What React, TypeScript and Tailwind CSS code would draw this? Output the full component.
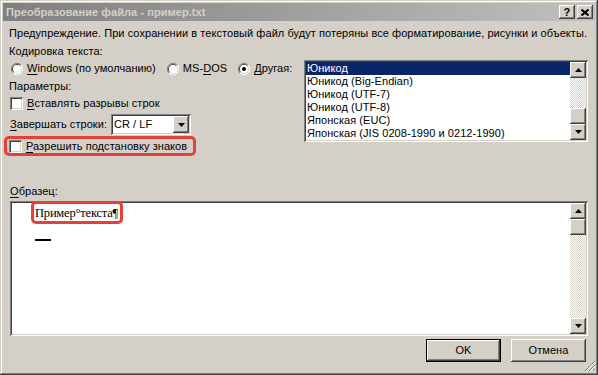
import type { ReactNode } from 'react';

const raised =
  'shadow-[inset_-1px_-1px_#404040,inset_1px_1px_#ffffff,inset_-2px_-2px_#808080,inset_2px_2px_#d4d0c8]';
const sunken =
  'shadow-[inset_1px_1px_#808080,inset_-1px_-1px_#ffffff,inset_2px_2px_#404040,inset_-2px_-2px_#d4d0c8]';
const checker = 'bg-[repeating-conic-gradient(#d4d0c8_0_25%,#ffffff_0_50%)] bg-[length:2px_2px]';

const Arrow = ({ up }: { up?: boolean }) => (
  <svg width="7" height="4" viewBox="0 0 7 4">
    <path d={up ? 'M3.5 0 L7 4 L0 4 Z' : 'M0 0 L7 0 L3.5 4 Z'} fill="#000" />
  </svg>
);

const ScrollBtn = ({ up }: { up?: boolean }) => (
  <div className={`w-[16px] h-[16px] bg-[#d4d0c8] flex items-center justify-center ${raised}`}>
    <Arrow up={up} />
  </div>
);

const Radio = ({ checked }: { checked?: boolean }) => (
  <svg width="12" height="12" viewBox="0 0 12 12" className="shrink-0">
    <circle cx="6" cy="6" r="5.5" fill="#fff" />
    <path d="M10 2 A5.5 5.5 0 0 0 2 10" stroke="#808080" fill="none" />
    <path d="M9.3 2.7 A4.5 4.5 0 0 0 2.7 9.3" stroke="#404040" fill="none" />
    <path d="M2 10 A5.5 5.5 0 0 0 10 2" stroke="#fff" fill="none" />
    <path d="M2.7 9.3 A4.5 4.5 0 0 0 9.3 2.7" stroke="#d4d0c8" fill="none" />
    {checked && <circle cx="6" cy="6" r="2" fill="#000" />}
  </svg>
);

const Checkbox = () => <div className={`w-[13px] h-[13px] bg-white shrink-0 ${sunken}`} />;

const U = ({ children }: { children: ReactNode }) => <span className="underline underline-offset-2">{children}</span>;

const encodings = [
  'Юникод',
  'Юникод (Big-Endian)',
  'Юникод (UTF-7)',
  'Юникод (UTF-8)',
  'Японская (EUC)',
  'Японская (JIS 0208-1990 и 0212-1990)',
];

export default function App() {
  return (
    <div
      className={`w-[598px] h-[375px] bg-[#d4d0c8] p-[3px] font-['Liberation_Sans',sans-serif] text-[11px] leading-[13px] tracking-[0.06px] text-black overflow-hidden ${'shadow-[inset_-1px_-1px_#404040,inset_1px_1px_#d4d0c8,inset_-2px_-2px_#808080,inset_2px_2px_#ffffff]'}`}
    >
      {/* title bar */}
      <div className="h-[18px] flex items-center pl-[3px] pr-[2px] bg-gradient-to-r from-[#808080] to-[#c0c0c0]">
        <span className="font-bold text-[#d4d0c8] flex-1">Преобразование файла - пример.txt</span>
        <div className={`w-[16px] h-[14px] bg-[#d4d0c8] flex items-center justify-center font-bold text-[11px] ${raised}`}>?</div>
        <div className={`ml-[2px] w-[16px] h-[14px] bg-[#d4d0c8] flex items-center justify-center ${raised}`}>
          <svg width="8" height="7" viewBox="0 0 8 7">
            <path d="M0.5 0.5 L7.5 6.5 M7.5 0.5 L0.5 6.5" stroke="#000" strokeWidth="2" />
          </svg>
        </div>
      </div>

      <div className="px-[6px]">
        <div className="mt-[6px]">
          Предупреждение. При сохранении в текстовый файл будут потеряны все форматирование, рисунки и объекты.
        </div>
        <div className="mt-[5px]">Кодировка текста:</div>

        <div className="flex">
          {/* left column */}
          <div className="w-[295px]">
            <div className="mt-[4px] h-[13px] flex items-center">
              <span className="ml-[2px]"><Radio /></span>
              <span className="ml-[4px]"><U>W</U>indows (по умолчанию)</span>
              <span className="ml-[11px]"><Radio /></span>
              <span className="ml-[4px]">MS-<U>D</U>OS</span>
              <span className="ml-[11px]"><Radio checked /></span>
              <span className="ml-[4px]"><U>Д</U>ругая:</span>
            </div>
            <div className="mt-[5px]">Параметры:</div>
            <div className="mt-[4px] h-[13px] flex items-center">
              <span className="ml-[1px]"><Checkbox /></span>
              <span className="ml-[4px]"><U>В</U>ставлять разрывы строк</span>
            </div>
            <div className="mt-[4px] flex items-center">
              <span className="ml-[1px] w-[101px]"><U>З</U>авершать строки:</span>
              <div className={`w-[80px] h-[21px] bg-white flex items-center pl-[3px] pr-[2px] ${sunken}`}>
                <span className="flex-1">CR / LF</span>
                <div className={`w-[16px] h-[17px] bg-[#d4d0c8] flex items-center justify-center ${raised}`}>
                  <Arrow />
                </div>
              </div>
            </div>
            <div className="mt-[1px] ml-[-5px] w-[192px] h-[20px] border-[3px] border-[#e5403a] rounded-[5px] flex items-center">
              <span className="ml-[2px]"><Checkbox /></span>
              <span className="ml-[4px]"><U>Р</U>азрешить подстановку знаков</span>
            </div>
          </div>

          {/* encoding list */}
          <div className={`mt-[2px] w-[284px] h-[82px] bg-white p-[2px] flex ${sunken}`}>
            <div className="flex-1">
              {encodings.map((e, i) => (
                <div
                  key={e}
                  className={`h-[13px] pl-[1px] ${i === 0 ? 'bg-[#0a246a] text-white' : ''}`}
                >
                  {e}
                </div>
              ))}
            </div>
            <div className={`w-[16px] flex flex-col ${checker}`}>
              <ScrollBtn up />
              <div className="flex-1" />
              <div className={`w-[16px] h-[16px] bg-[#d4d0c8] ${raised}`} />
              <ScrollBtn />
            </div>
          </div>
        </div>

        <div className="mt-[29px] ml-[1px]"><U>О</U>бразец:</div>

        {/* sample box */}
        <div className={`relative mt-[3px] ml-[1px] w-[578px] h-[135px] bg-white p-[2px] flex ${sunken}`}>
          <div className="flex-1 relative">
            <div className="absolute left-[19px] top-[-2px] w-[92px] h-[23px] border-[3px] border-[#e5403a] rounded-[5px]" />
            <div className="pl-[23px] pt-[3px] font-['Liberation_Serif',serif] text-[12.5px] leading-[15px] tracking-[-0.2px]">Пример°текста¶</div>
            <div className="ml-[23px] mt-[18px] w-[16px] h-[2px] bg-black" />
          </div>
          <div className={`w-[16px] flex flex-col ${checker}`}>
            <ScrollBtn up />
            <div className={`w-[16px] h-[16px] bg-[#d4d0c8] ${raised}`} />
            <div className="flex-1" />
            <ScrollBtn />
          </div>
        </div>

        {/* buttons */}
        <div className="mt-[3px] flex justify-end gap-[10px] pr-[3px]">
          <div className="w-[75px] h-[23px] border border-black">
            <div className={`w-full h-full flex items-center justify-center ${raised}`}>OK</div>
          </div>
          <div className={`w-[75px] h-[23px] flex items-center justify-center ${raised}`}>Отмена</div>
        </div>
      </div>

      {/* size grip */}
      <div className="flex justify-end mt-[-2px] mr-[-1px]">
        <svg width="12" height="12" viewBox="0 0 12 12">
          <path d="M11 1 L1 11 M11 5 L5 11 M11 9 L9 11" stroke="#808080" />
          <path d="M11 2 L2 11 M11 6 L6 11 M11 10 L10 11" stroke="#ffffff" />
        </svg>
      </div>
    </div>
  );
}
